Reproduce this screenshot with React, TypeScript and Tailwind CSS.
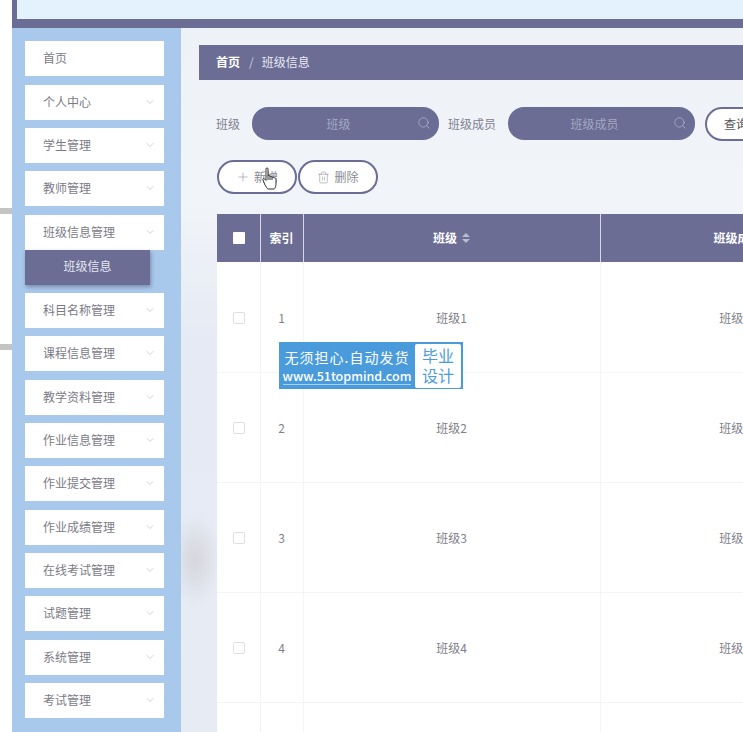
import {ChevronDown, Plus, Search, Trash2} from 'lucide-react';

const font = {fontFamily: '"Noto Sans CJK SC", "Noto Sans", sans-serif'};

const menusBefore = ['个人中心', '学生管理', '教师管理', '班级信息管理'];
const menusAfter = ['科目名称管理', '课程信息管理', '教学资料管理', '作业信息管理', '作业提交管理', '作业成绩管理', '在线考试管理', '试题管理', '系统管理', '考试管理'];
const rows = ['1', '2', '3', '4'];

function MenuItem({label, arrow = true}: {label: string; arrow?: boolean}) {
    return (
        <div className="flex h-[35px] w-[139px] shrink-0 items-center justify-between bg-white pb-[1px] pl-[18px] pr-[8px] text-xs text-[#7b7b86]">
            <span>{label}</span>
            {arrow ? <ChevronDown size={12} strokeWidth={1} className="text-[#a5a5ad]"/> : null}
        </div>
    );
}

function SearchInput({placeholder}: {placeholder: string}) {
    return (
        <div className="relative flex h-[33px] w-[187px] shrink-0 items-center justify-center rounded-[16px] bg-[#6b6d95] pr-[14px] text-xs text-[#a6a8c2]">
            {placeholder}
            <Search size={14} strokeWidth={1} className="absolute right-[8px] top-[9px] text-[#c3c5d6]"/>
        </div>
    );
}

function SortIcon() {
    return (
        <svg width="8" height="10" viewBox="0 0 8 10" fill="#b9bbd0">
            <path d="M4 0 8 4H0Z"/>
            <path d="M4 10 0 6H8Z"/>
        </svg>
    );
}

export default function App() {
    return (
        <div style={font} className="relative h-[732px] w-[743px] overflow-hidden bg-white pl-3">
            <div className="absolute left-0 top-[208px] h-[6px] w-3 bg-[#c4c4c4]"/>
            <div className="absolute left-0 top-[344px] h-[6px] w-3 bg-[#c4c4c4]"/>

            <div className="h-[28px] border-b-[9px] border-l-[5px] border-[#6b6d95] bg-[#e3f2fd]"/>

            <div className="flex h-[704px]">
                <aside className="flex w-[169px] shrink-0 flex-col gap-[8.33px] bg-[#a9c9ec] pl-[13px] pt-[13.3px]">
                    <MenuItem label="首页" arrow={false}/>
                    {menusBefore.map((menu) => (
                        <MenuItem key={menu} label={menu}/>
                    ))}
                    <div className="-mt-[8.33px] flex h-[35px] w-[125px] shrink-0 items-center justify-center bg-[#6b6d95] pb-[2px] text-xs text-[#e6e6f0] shadow-[1px_2px_4px_rgba(60,60,90,0.45)]">
                        班级信息
                    </div>
                    {menusAfter.map((menu) => (
                        <MenuItem key={menu} label={menu}/>
                    ))}
                </aside>

                <main className="min-w-0 flex-1 bg-[radial-gradient(ellipse_26px_45px_at_14px_532px,#d6d6db,transparent),linear-gradient(180deg,#eef1f5_0%,#f1f4f8_25%,#e5eaf4_45%,#e6ebf4_100%)] pl-[18px] pt-[17px]">
                    <div className="flex h-[35px] w-[560px] items-center bg-[#6b6d95] pb-[1px] pl-[17px] text-xs text-[#e9e9f2]">
                        <span className="font-bold text-white">首页</span>
                        <span className="ml-[9px] mr-[8px] text-[#c9cadb]">/</span>
                        <span>班级信息</span>
                    </div>

                    <div className="ml-[17px] mt-[27px] flex h-[33px] w-[600px] items-center text-xs text-[#7f8090]">
                        <span className="mr-[12px]">班级</span>
                        <SearchInput placeholder="班级"/>
                        <span className="ml-[9px] mr-[12px]">班级成员</span>
                        <SearchInput placeholder="班级成员"/>
                        <button className="ml-[10px] flex h-[34px] w-[80px] shrink-0 items-center rounded-[17px] border-2 border-[#6b6d95] bg-white pl-[17px] text-xs text-[#555]">
                            查询
                        </button>
                    </div>

                    <div className="ml-[18px] mt-[20px] flex gap-px">
                        <button className="flex h-[34px] w-[80px] items-center justify-center gap-[4px] rounded-[17px] border-2 border-[#6b6d95] bg-white text-xs text-[#8a8a94]">
                            <Plus size={14} strokeWidth={1}/>
                            新增
                        </button>
                        <button className="flex h-[34px] w-[80px] items-center justify-center gap-[4px] rounded-[17px] border-2 border-[#6b6d95] bg-white text-xs text-[#8a8a94]">
                            <Trash2 size={13} strokeWidth={1}/>
                            删除
                        </button>
                    </div>

                    <table className="ml-[18px] mt-[20px] w-[980px] table-fixed border-collapse bg-white text-xs text-[#808088]">
                        <colgroup>
                            <col className="w-[43px]"/>
                            <col className="w-[43px]"/>
                            <col className="w-[297px]"/>
                            <col className="w-[297px]"/>
                            <col/>
                        </colgroup>
                        <thead>
                            <tr className="h-[48px] bg-[#6b6d95] text-white">
                                <th className="border-r border-[#d7d8e4]">
                                    <span className="mx-auto block h-[12px] w-[12px] translate-x-px rounded-[1px] bg-white"/>
                                </th>
                                <th className="border-r border-[#d7d8e4]">索引</th>
                                <th className="border-r border-[#d7d8e4]">
                                    <span className="inline-flex items-center gap-[5px]">
                                        班级
                                        <SortIcon/>
                                    </span>
                                </th>
                                <th className="border-r border-[#d7d8e4] pr-[9px]">
                                    <span className="inline-flex items-center gap-[5px]">
                                        班级成员
                                        <SortIcon/>
                                    </span>
                                </th>
                                <th/>
                            </tr>
                        </thead>
                        <tbody>
                            {rows.map((row) => (
                                <tr key={row} className="h-[110px] border-b border-[#f3f4f6] text-center">
                                    <td className="border-r border-[#f3f4f6] pt-[2px]">
                                        <span className="mx-auto block h-[12px] w-[12px] translate-x-px rounded-[2px] border border-[#dcdfe6]"/>
                                    </td>
                                    <td className="border-r border-[#f3f4f6] pt-[2px]">{row}</td>
                                    <td className="border-r border-[#f3f4f6] pt-[2px]">班级{row}</td>
                                    <td className="border-r border-[#f3f4f6] pr-[4px] pt-[2px]">班级成员{row}</td>
                                    <td/>
                                </tr>
                            ))}
                            <tr className="h-[110px] text-center">
                                <td className="border-r border-[#f3f4f6]"/>
                                <td className="border-r border-[#f3f4f6]"/>
                                <td className="border-r border-[#f3f4f6]"/>
                                <td className="border-r border-[#f3f4f6]"/>
                                <td/>
                            </tr>
                        </tbody>
                    </table>
                </main>
            </div>

            <div className="absolute left-[279px] top-[342px] flex h-[47px] w-[184px] items-center bg-[#4a9bdc] pr-[2px] text-white">
                <div className="flex w-[136px] flex-col items-center">
                    <span className="pb-[1px] text-[14px] leading-[20px] tracking-[1px]">无须担心.自动发货</span>
                    <span className="border-b border-[#a9d2f0] text-[12.5px] font-medium leading-[16px]">www.51topmind.com</span>
                </div>
                <div className="flex h-[44px] w-[46px] flex-col items-center justify-center rounded-[2px] bg-white pb-[2px] text-[16px] leading-[20px] text-[#4a9bdc]">
                    <span>毕业</span>
                    <span>设计</span>
                </div>
            </div>

            <svg className="absolute left-[262px] top-[167px]" width="15" height="23" viewBox="0 0 15 23" fill="#fff" stroke="#333" strokeWidth="1">
                <path d="M4 2c0-1.500 2-1.500 2 0v7c0-1 2-1 2 0v1c0-1 2-1 2 0v1c0-1 2-1 2 0 1-.5 2 0 2 1v4c0 3-1 6-2 6H6c-1 0-2-3-3-4L1 13c-.6-1 .6-2 1.500-1.200L4 13.500Z"/>
                <path d="M6 9v4M8 10v3M10 11v2" fill="none"/>
            </svg>
        </div>
    );
}
